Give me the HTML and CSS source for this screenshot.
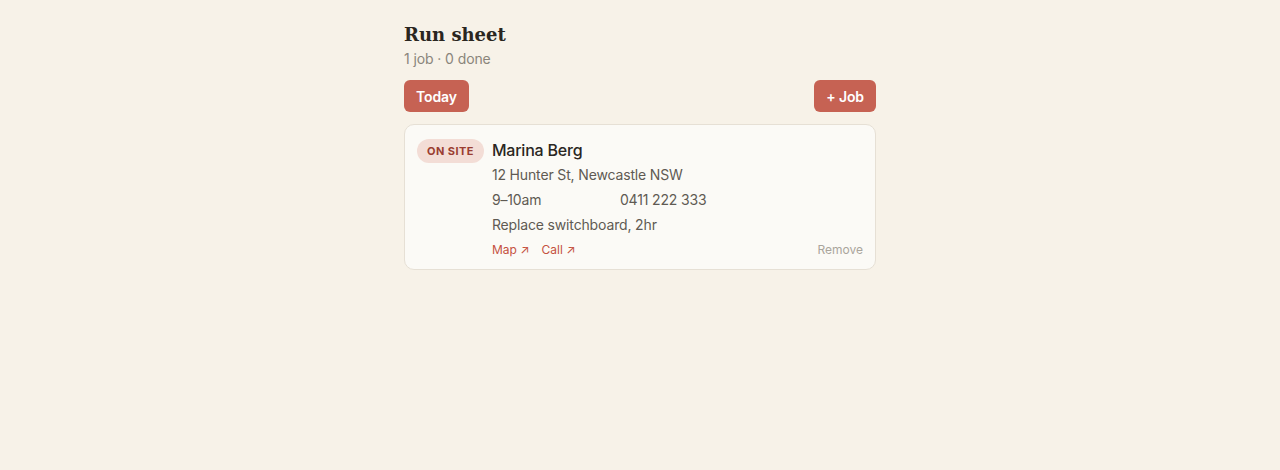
FILE: index.html
```html
<!DOCTYPE html>
<html lang="en">
<head>
    <meta charset="UTF-8">
    <meta name="viewport" content="width=device-width, initial-scale=1.0">
    <title>Run sheet</title>
    <link rel="stylesheet" href="styles.css">
</head>
<body>

    <div class="page">
        <h1 class="title">Run sheet</h1>
        <p class="subtitle">1 job · 0 done</p>

        <div class="toolbar">
            <button class="btn">Today</button>
            <button class="btn">+ Job</button>
        </div>

        <!-- Jobs -->
        <div class="job">
            <span class="badge">ON SITE</span>
            <div class="job-body">
                <div class="job-name">Marina Berg</div>
                <div class="job-line">12 Hunter St, Newcastle NSW</div>
                <div class="job-row">
                    <span>9–10am</span>
                    <span>0411 222 333</span>
                </div>
                <div class="job-line">Replace switchboard, 2hr</div>
                <div class="job-actions">
                    <div class="links">
                        <a href="#">Map ↗</a>
                        <a href="#">Call ↗</a>
                    </div>
                    <a href="#" class="remove">Remove</a>
                </div>
            </div>
        </div>
    </div>

</body>
</html>
```

FILE: styles.css
```css
* { margin: 0; padding: 0; box-sizing: border-box; font-family: Inter, "Noto Sans", sans-serif; }
body { background: #f7f2e8; color: #2b2823; }

.page {
    width: 472px;
    margin: 0 auto;
    padding-top: 22px;
}

.title {
    font-family: "DejaVu Serif", serif;
    font-size: 18px;
    font-weight: bold;
    line-height: 26px;
    color: #2a2620;
}

.subtitle {
    font-size: 14px;
    line-height: 22px;
    color: #8a857b;
    letter-spacing: -0.1px;
}

.toolbar {
    display: flex;
    justify-content: space-between;
    margin-top: 10px;
}

.btn {
    height: 32px;
    padding: 0 12px;
    border: none;
    border-radius: 6px;
    background: #c66253;
    color: white;
    font-size: 14px;
    font-weight: 600;
    letter-spacing: -0.1px;
    cursor: pointer;
}

.job {
    display: flex;
    align-items: flex-start;
    gap: 8px;
    margin-top: 12px;
    padding: 13px 12px 9px;
    background: #fbfaf6;
    border: 1px solid #e6e0d5;
    border-radius: 10px;
}

.badge {
    flex: none;
    margin-top: 1px;
    height: 24px;
    line-height: 24px;
    padding: 0 10px;
    border-radius: 12px;
    background: #f3ddd6;
    color: #9a3d31;
    font-size: 11px;
    font-weight: 700;
    letter-spacing: 0.04em;
}

.job-body { flex: 1; }

.job-name {
    font-size: 16px;
    font-weight: 500;
    line-height: 24px;
    color: #2a2622;
    letter-spacing: -0.2px;
}

.job-line, .job-row {
    font-size: 14px;
    line-height: 25px;
    color: #5f5a53;
    letter-spacing: -0.15px;
}

.job-row {
    display: grid;
    grid-template-columns: 128px auto;
    justify-content: start;
}

.job-actions {
    display: flex;
    justify-content: space-between;
    align-items: center;
    margin-top: 3px;
    font-size: 12px;
    line-height: 20px;
}

.links { display: flex; gap: 12px; }

.job-actions a { text-decoration: none; color: #c5513f; }

.job-actions .remove { color: #aaa59c; }
```
